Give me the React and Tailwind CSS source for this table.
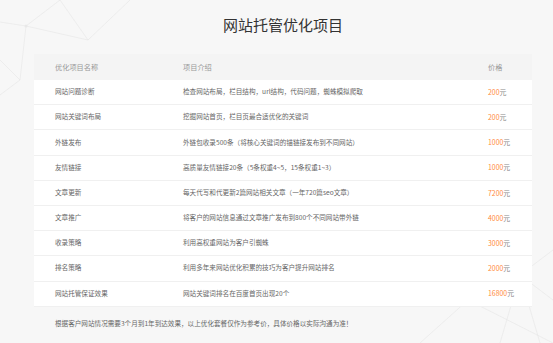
import React from "react";

const rows = [
  { name: "网站问题诊断", intro: "检查网站布局，栏目结构，url结构，代码问题，蜘蛛模拟爬取", price: "200" },
  { name: "网站关键词布局", intro: "挖掘网站首页，栏目页最合适优化的关键词", price: "200" },
  { name: "外链发布", intro: "外链包收录500条（将核心关键词的锚链接发布到不同网站）", price: "1000" },
  { name: "友情链接", intro: "高质量友情链接20条（5条权重4~5，15条权重1~3）", price: "1000" },
  { name: "文章更新", intro: "每天代写和代更新2篇网站相关文章（一年720篇seo文章）", price: "7200" },
  { name: "文章推广", intro: "将客户的网站信息通过文章推广发布到800个不同网站带外链", price: "4000" },
  { name: "收录策略", intro: "利用高权重网站为客户引蜘蛛", price: "3000" },
  { name: "排名策略", intro: "利用多年来网站优化积累的技巧为客户提升网站排名", price: "2000" },
  { name: "网站托管保证效果", intro: "网站关键词排名在百度首页出现20个", price: "16800" },
];

function NetBg() {
  return (
    <svg className="absolute inset-0 w-full h-full pointer-events-none" viewBox="0 0 553 343">
      <g stroke="#e6e6e6" strokeWidth="0.6" fill="none">
        <path d="M0 22 L26 26 L60 0 M26 26 L20 80 M26 26 L88 40 L130 0 M88 40 L60 0 M0 95 L20 80 L0 60" />
        <path d="M553 250 L520 275 L480 262 L468 300 L520 275 L553 300 M520 275 L500 343 M468 300 L420 343 M468 300 L553 343 M520 275 L540 343" />
      </g>
      <g fill="#e8e8e8">
        <circle cx="26" cy="26" r="1.5" />
        <circle cx="468" cy="300" r="2.5" />
        <circle cx="520" cy="275" r="1.5" />
      </g>
    </svg>
  );
}

export default function App() {
  return (
    <div
      className="relative w-[553px] h-[343px] overflow-hidden bg-[#f7f7f7] text-[#666]"
      style={{ fontFamily: '"Noto Sans CJK SC", "Noto Sans", sans-serif' }}
    >
      <NetBg />
      <div className="relative pl-[34px] pt-[15px]">
        <h1 className="w-[498px] text-center text-[15px] leading-[20px] text-[#333] font-normal">
          网站托管优化项目
        </h1>

        {/* table */}
        <div className="w-[498px] mt-[19px] bg-white">
          <div className="grid grid-cols-[128px_305px_1fr] items-center h-[26px] pl-[21px] bg-[#f4f4f4] text-[7.2px] text-[#999]">
            <span>优化项目名称</span>
            <span>项目介绍</span>
            <span>价格</span>
          </div>
          {rows.map((r, i) => (
            <div
              key={i}
              className="grid grid-cols-[128px_305px_1fr] items-center h-[25.2px] pl-[21px] border-b border-[#f0f0f0] text-[6.6px]"
            >
              <span>{r.name}</span>
              <span>{r.intro}</span>
              <span className="text-[6.9px]">
                <span className="text-[#ff8a3c]">{r.price}</span>
                <span className="text-[#888]">元</span>
              </span>
            </div>
          ))}
        </div>

        <p className="mt-[12px] pl-[21px] text-[6.6px] text-[#666]">
          根据客户网站情况需要3个月到1年到达效果，以上优化套餐仅作为参考价，具体价格以实际沟通为准！
        </p>
      </div>
    </div>
  );
}
